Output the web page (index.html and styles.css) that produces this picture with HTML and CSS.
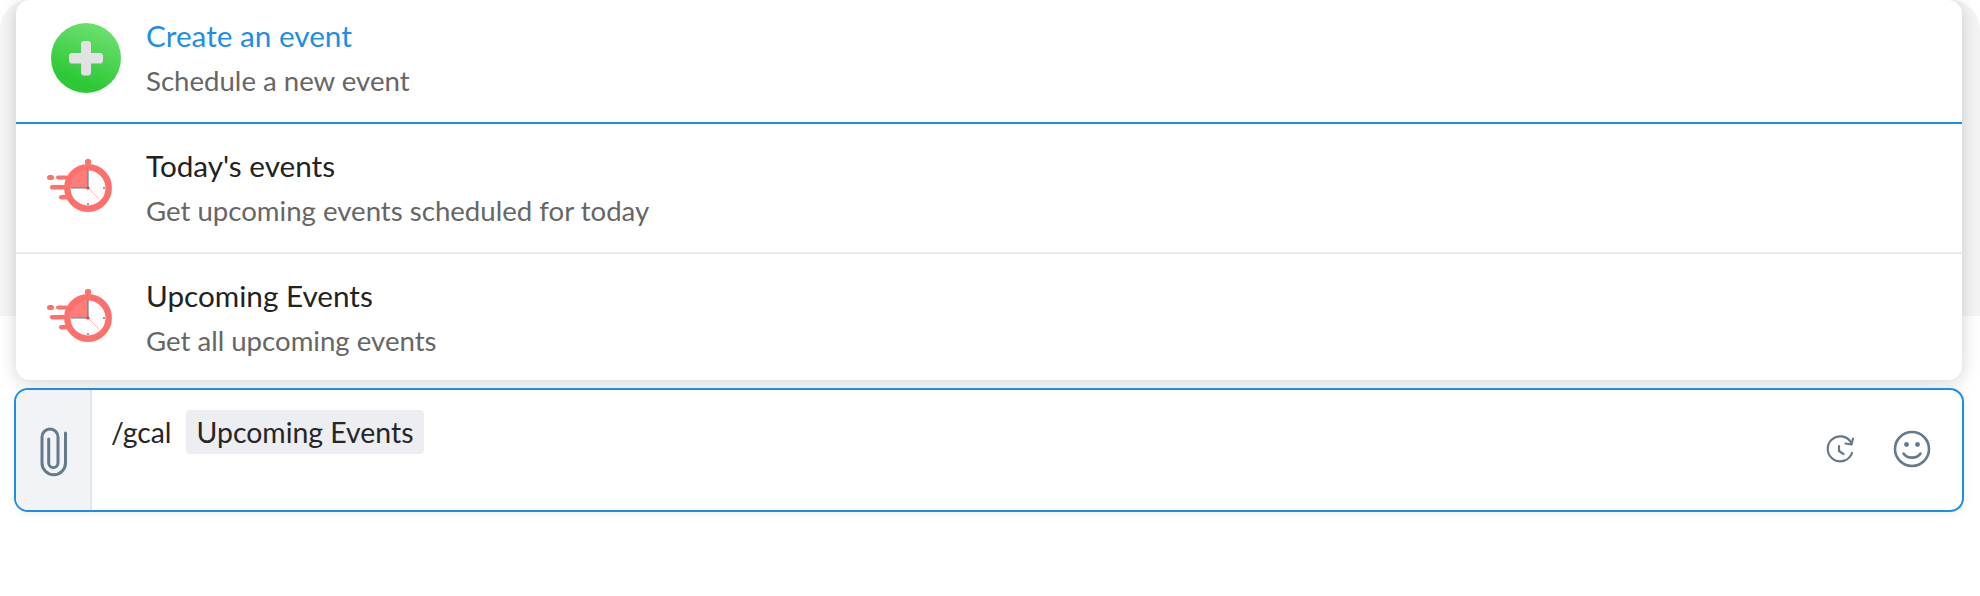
FILE: index.html
```html
<!DOCTYPE html>
<html lang="en">
<head>
	<meta charset="UTF-8">
	<title>Upcoming Events</title>
	<link rel="stylesheet" href="styles.css">
</head>
<body>
	<svg width="0" height="0" class="defs">
		<defs>
			<linearGradient id="green" x1="0.7" y1="0.05" x2="0.4" y2="0.85">
				<stop offset="0" stop-color="#6be06f"/>
				<stop offset="1" stop-color="#2dc836"/>
			</linearGradient>
			<symbol id="timer" viewBox="0 0 80 80">
				<rect x="39" y="6" width="6" height="6" rx="2.500" fill="#ff6f6b"/>
				<circle cx="42" cy="35" r="20.700" fill="#fff" stroke="#ff6f6b" stroke-width="6.400"/>
				<path d="M42 35V17A18 18 0 0 0 24 35Z" fill="#ff7d79"/>
				<path d="M42 17V35H25" fill="none" stroke="#6d7f8c" stroke-width="1.200"/>
				<path d="M42 35L53 46" stroke="#ffb9b6" stroke-width="1"/>
				<circle cx="42" cy="35" r="1.600" fill="#f33"/>
				<circle cx="58" cy="35" r="1" fill="#6d7f8c"/>
				<circle cx="42" cy="51" r="1" fill="#6d7f8c"/>
				<g fill="#ff6f6b">
					<rect x="1" y="22" width="7" height="5" rx="2.500"/>
					<rect x="10" y="22.500" width="12" height="4" rx="2"/>
					<rect x="4" y="32" width="17" height="4.500" rx="2.200"/>
					<rect x="13" y="42" width="10" height="4.500" rx="2.200"/>
				</g>
			</symbol>
		</defs>
	</svg>

	<div class="backdrop"></div>

	<div class="page">
		<ul class="menu">
			<li class="item first">
				<svg class="icon" viewBox="0 0 80 80">
					<circle cx="40" cy="40" r="35" fill="url(#green)"/>
					<rect x="35" y="24" width="10" height="34" rx="3" fill="#b9bbbd"/>
					<rect x="23" y="36" width="34" height="10" rx="3" fill="#b9bbbd"/>
					<rect x="35" y="23" width="10" height="34" rx="3" fill="#e2e2e5"/>
					<rect x="23" y="35" width="34" height="10" rx="3" fill="#e2e2e5"/>
				</svg>
				<div class="text">
					<div class="title active">Create an event</div>
					<div class="sub">Schedule a new event</div>
				</div>
			</li>
			<li class="item">
				<svg class="icon"><use href="#timer"/></svg>
				<div class="text">
					<div class="title">Today's events</div>
					<div class="sub">Get upcoming events scheduled for today</div>
				</div>
			</li>
			<li class="item last">
				<svg class="icon"><use href="#timer"/></svg>
				<div class="text">
					<div class="title">Upcoming Events</div>
					<div class="sub">Get all upcoming events</div>
				</div>
			</li>
		</ul>

		<div class="composer">
			<div class="attach">
				<svg width="28" height="54" viewBox="0 0 28 54" fill="none" stroke="#64798a" stroke-width="3" stroke-linecap="round">
					<path d="M25.500 8V38A11.750 11.750 0 0 1 2 38V12A8 8 0 0 1 18 12V38A4.650 4.650 0 0 1 8.700 38V14"/>
				</svg>
			</div>
			<div class="input">
				<span class="cmd">/gcal</span>
				<span class="tag">Upcoming Events</span>
			</div>
			<div class="tools">
				<svg width="30" height="30" viewBox="0 0 30 30" fill="none" stroke="#64798a" stroke-width="2.200" stroke-linecap="round" stroke-linejoin="round">
					<path d="M25 8.500A12.500 12.500 0 1 0 26 19"/>
					<path d="M27 4.500L25.500 10.500L19.500 9.500"/>
					<path d="M13 12V17L17.500 20"/>
				</svg>
				<svg width="38" height="38" viewBox="0 0 38 38" fill="none" stroke="#64798a" stroke-width="2.600" stroke-linecap="round">
					<circle cx="19" cy="19" r="17"/>
					<path d="M10.500 23.500C14 29 24 29 27.500 23.500"/>
					<circle cx="13.500" cy="14.500" r="2.400" fill="#64798a" stroke="none"/>
					<circle cx="24.500" cy="14.500" r="2.400" fill="#64798a" stroke="none"/>
				</svg>
			</div>
		</div>
	</div>
</body>
</html>
```

FILE: styles.css
```css
*{
	margin: 0;
	padding: 0;
	box-sizing: border-box;
}
ul{
	list-style-type: none;
}
html, body{
	height: 596px;
	overflow: hidden;
	background: #fff;
}
body{
	font-family: "Lato", "Liberation Sans", sans-serif;
	position: relative;
}
.defs{
	position: absolute;
}
/* panel behind the popup */
.backdrop{
	position: absolute;
	left: 0;
	top: 0;
	width: 1980px;
	height: 316px;
	background: #f5f5f6;
	border-radius: 30px 30px 0 0;
}
.page{
	position: relative;
	padding: 0 16px 0 14px;
}
.menu{
	margin: 0 0 0 2px;
	width: 1946px;
	height: 380px;
	background: #fff;
	border-radius: 14px;
	box-shadow: 0 2px 18px rgba(0, 0, 0, .18);
	overflow: hidden;
}
.item{
	display: flex;
	align-items: flex-start;
	height: 130px;
	padding: 19px 0 0 30px;
	border-bottom: 2px solid #ebebef;
}
.item.first{
	height: 124px;
	padding-top: 13px;
	border-bottom-color: #1b8eec;
}
.item.last{
	height: 126px;
	border-bottom: 0;
}
.icon{
	width: 80px;
	height: 80px;
	flex: none;
	margin-top: 10px;
}
.first .icon{
	margin-top: 5px;
}
.text{
	margin-left: 20px;
}
.title{
	font-size: 29.7px;
	line-height: 45px;
	color: #222;
}
.title.active{
	color: #1b8eec;
}
.sub{
	font-size: 27.6px;
	line-height: 45px;
	color: #666;
}
.composer{
	display: flex;
	width: 1950px;
	height: 124px;
	margin-top: 8px;
	background: #fff;
	border: 2px solid #1b8eec;
	border-radius: 14px;
	box-shadow: 0 2px 10px rgba(0, 0, 0, .06);
	overflow: hidden;
}
.attach{
	display: flex;
	align-items: center;
	justify-content: center;
	width: 76px;
	flex: none;
	background: #f1f3f7;
	border-right: 2px solid #e3e5ea;
	padding: 4px 0 0 2px;
}
.input{
	flex: 1;
	display: flex;
	align-items: center;
	align-self: flex-start;
	padding: 20px 0 0 19px;
	font-size: 28.4px;
	color: #262626;
}
.tag{
	margin-left: 14px;
	padding: 0 11px;
	line-height: 44px;
	background: #edeef2;
	border-radius: 4px;
}
.tools{
	display: flex;
	align-items: center;
	gap: 37px;
	padding: 0 31px 0 0;
	margin-top: -2px;
}
```
